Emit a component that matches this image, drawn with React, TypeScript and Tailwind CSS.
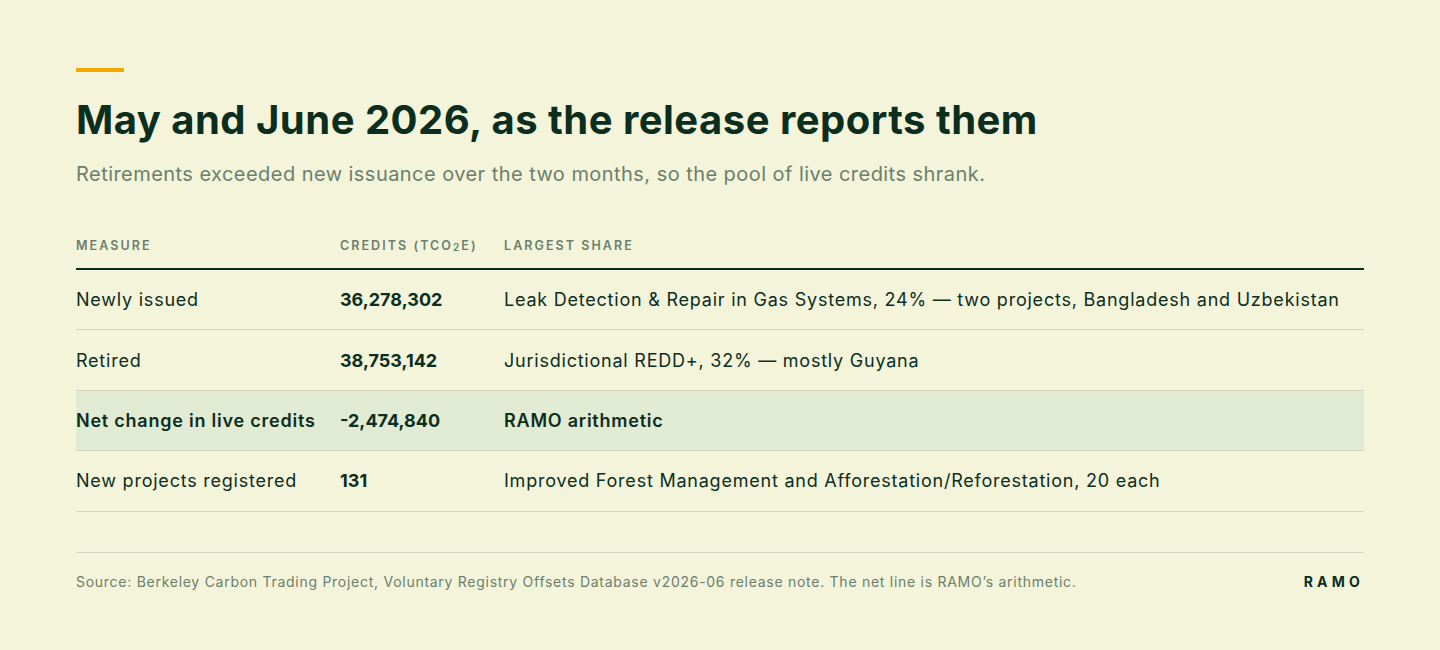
import React from "react";

const rows = [
  { m: "Newly issued", c: "36,278,302", s: "Leak Detection & Repair in Gas Systems, 24% — two projects, Bangladesh and Uzbekistan", hl: false },
  { m: "Retired", c: "38,753,142", s: "Jurisdictional REDD+, 32% — mostly Guyana", hl: false },
  { m: "Net change in live credits", c: "-2,474,840", s: "RAMO arithmetic", hl: true },
  { m: "New projects registered", c: "131", s: "Improved Forest Management and Afforestation/Reforestation, 20 each", hl: false },
];

export default function App() {
  return (
    <div className="min-h-[650px] w-full bg-[#f4f4da] text-[#0b2e1f]" style={{ fontFamily: "Inter, 'Noto Sans', sans-serif" }}>
      <div className="mx-[76px] pt-[68px]">
        <div className="h-1 w-12 bg-[#f5a800]" />
        <h1 className="mt-6 text-[40px] font-bold leading-[48px] tracking-[0.012em] text-[#0b2e1f]">
          May and June 2026, as the release reports them
        </h1>
        <p className="mt-4 text-[20px] leading-[28px] tracking-[0.0225em] text-[#6b7f6e]">
          Retirements exceeded new issuance over the two months, so the pool of live credits shrank.
        </p>
        <div className="mt-[50px]">
          <div className="grid grid-cols-[264px_164px_1fr] border-b-2 border-[#0b2e1f] pb-[14px] text-[12.5px] font-semibold uppercase leading-4 tracking-[0.165em] text-[#6b7f6e]">
            <div>Measure</div>
            <div>
              Credits (TCO<span className="relative top-[1px] text-[10px]">2</span>E)
            </div>
            <div>Largest share</div>
          </div>
          {rows.map((r) => (
            <div
              key={r.m}
              className={`grid h-[60.4px] grid-cols-[264px_164px_1fr] items-center border-b border-[#d0d5c0] text-[18px] ${r.hl ? "bg-[#e1ead3] font-semibold" : ""}`}
            >
              <div className="tracking-[0.043em]">{r.m}</div>
              <div className="font-bold">{r.c}</div>
              <div className="tracking-[0.043em]">{r.s}</div>
            </div>
          ))}
        </div>
        <div className="mt-10 flex items-center justify-between border-t border-[#d0d5c0] pt-[19px]">
          <div className="text-[14px] leading-5 tracking-[0.052em] text-[#6b7f6e]">
            Source: Berkeley Carbon Trading Project, Voluntary Registry Offsets Database v2026-06 release note. The net line is RAMO’s arithmetic.
          </div>
          <div className="text-[14px] font-bold leading-5 tracking-[0.3em] text-[#0b2e1f]">RAMO</div>
        </div>
      </div>
    </div>
  );
}
